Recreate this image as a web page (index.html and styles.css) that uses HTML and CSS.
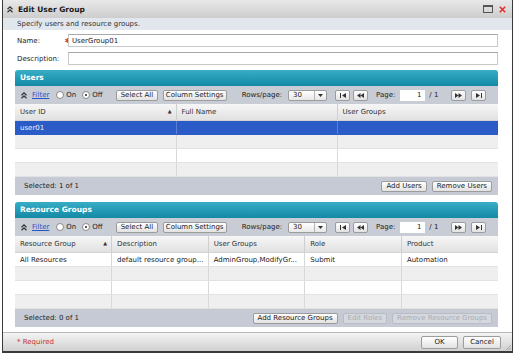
FILE: index.html
```html
<!DOCTYPE html>
<html lang="en">
<head>
    <meta charset="UTF-8">
    <title>Edit User Group</title>
    <link rel="stylesheet" href="styles.css">
</head>
<body>
    <div class="dialog">
        <div class="titlebar">
            <svg class="chev" width="6" height="7" viewBox="0 0 6 7"><path d="M0.5 3.3 L3 0.9 L5.5 3.3 M0.5 6.3 L3 3.9 L5.5 6.3" stroke="#333" stroke-width="1.2" fill="none"/></svg>
            <span class="title">Edit User Group</span>
            <span class="win-btns">
                <svg width="10" height="8" viewBox="0 0 10 8"><rect x="0.5" y="0.5" width="9" height="7" fill="none" stroke="#555"/><rect x="0.5" y="0.5" width="9" height="1.5" fill="#555"/></svg>
                <svg width="7" height="7" viewBox="0 0 7 7"><path d="M0.8 0.8 L6.2 6.2 M6.2 0.8 L0.8 6.2" stroke="#e03030" stroke-width="1.6"/></svg>
            </span>
        </div>
        <div class="subtitle">Specify users and resource groups.</div>

        <div class="form">
            <div class="field">
                <label for="name">Name:</label>
                <span class="req">&#8727;</span>
                <input type="text" id="name" value="UserGroup01">
            </div>
            <div class="field">
                <label for="desc">Description:</label>
                <span class="req"></span>
                <input type="text" id="desc">
            </div>
        </div>

        <section class="panel">
            <div class="panel-head">Users</div>
            <div class="toolbar">
                <svg class="chev" width="6" height="7" viewBox="0 0 6 7"><path d="M0.5 3.3 L3 0.9 L5.5 3.3 M0.5 6.3 L3 3.9 L5.5 6.3" stroke="#333" stroke-width="1.2" fill="none"/></svg>
                <a class="filter">Filter</a>
                <span class="radio"></span><span class="rlabel">On</span>
                <span class="radio on"></span><span class="rlabel">Off</span>
                <button class="btn sel-all">Select All</button>
                <button class="btn col-set">Column Settings</button>
                <span class="rows-label">Rows/page:</span>
                <div class="select"><span class="val">30</span><span class="arrow"><svg width="5" height="3" viewBox="0 0 5 3"><path d="M0 0 H5 L2.5 3 Z" fill="#333"/></svg></span></div>
                <button class="nav first"><svg width="6" height="5" viewBox="0 0 6 5"><rect x="0" y="0" width="1" height="5" fill="#333"/><path d="M6 0 V5 L2 2.5 Z" fill="#333"/></svg></button>
                <button class="nav prev"><svg width="7" height="5" viewBox="0 0 7 5"><path d="M3.5 0 V5 L0 2.5 Z M7 0 V5 L3.5 2.5 Z" fill="#333"/></svg></button>
                <span class="page-label">Page:</span>
                <span class="page-input">1</span>
                <span class="page-total">/ 1</span>
                <button class="nav next"><svg width="7" height="5" viewBox="0 0 7 5"><path d="M0 0 V5 L3.5 2.5 Z M3.5 0 V5 L7 2.5 Z" fill="#333"/></svg></button>
                <button class="nav last"><svg width="6" height="5" viewBox="0 0 6 5"><path d="M0 0 V5 L4 2.5 Z" fill="#333"/><rect x="5" y="0" width="1" height="5" fill="#333"/></svg></button>
            </div>
            <table class="grid">
                <thead>
                    <tr><th>User ID<span class="sort">&#9650;</span></th><th>Full Name</th><th>User Groups</th></tr>
                </thead>
                <tbody>
                    <tr class="selected"><td>user01</td><td></td><td></td></tr>
                    <tr><td></td><td></td><td></td></tr>
                    <tr><td></td><td></td><td></td></tr>
                    <tr><td></td><td></td><td></td></tr>
                </tbody>
            </table>
            <div class="panel-foot">
                <span>Selected: 1 of 1</span>
                <button class="btn first-btn">Add Users</button>
                <button class="btn">Remove Users</button>
            </div>
        </section>

        <section class="panel rg">
            <div class="panel-head">Resource Groups</div>
            <div class="toolbar">
                <svg class="chev" width="6" height="7" viewBox="0 0 6 7"><path d="M0.5 3.3 L3 0.9 L5.5 3.3 M0.5 6.3 L3 3.9 L5.5 6.3" stroke="#333" stroke-width="1.2" fill="none"/></svg>
                <a class="filter">Filter</a>
                <span class="radio"></span><span class="rlabel">On</span>
                <span class="radio on"></span><span class="rlabel">Off</span>
                <button class="btn sel-all">Select All</button>
                <button class="btn col-set">Column Settings</button>
                <span class="rows-label">Rows/page:</span>
                <div class="select"><span class="val">30</span><span class="arrow"><svg width="5" height="3" viewBox="0 0 5 3"><path d="M0 0 H5 L2.5 3 Z" fill="#333"/></svg></span></div>
                <button class="nav first"><svg width="6" height="5" viewBox="0 0 6 5"><rect x="0" y="0" width="1" height="5" fill="#333"/><path d="M6 0 V5 L2 2.5 Z" fill="#333"/></svg></button>
                <button class="nav prev"><svg width="7" height="5" viewBox="0 0 7 5"><path d="M3.5 0 V5 L0 2.5 Z M7 0 V5 L3.5 2.5 Z" fill="#333"/></svg></button>
                <span class="page-label">Page:</span>
                <span class="page-input">1</span>
                <span class="page-total">/ 1</span>
                <button class="nav next"><svg width="7" height="5" viewBox="0 0 7 5"><path d="M0 0 V5 L3.5 2.5 Z M3.5 0 V5 L7 2.5 Z" fill="#333"/></svg></button>
                <button class="nav last"><svg width="6" height="5" viewBox="0 0 6 5"><path d="M0 0 V5 L4 2.5 Z" fill="#333"/><rect x="5" y="0" width="1" height="5" fill="#333"/></svg></button>
            </div>
            <table class="grid">
                <thead>
                    <tr><th>Resource Group<span class="sort">&#9650;</span></th><th>Description</th><th>User Groups</th><th>Role</th><th>Product</th></tr>
                </thead>
                <tbody>
                    <tr><td>All Resources</td><td>default resource group...</td><td>AdminGroup,ModifyGr...</td><td>Submit</td><td>Automation</td></tr>
                    <tr><td></td><td></td><td></td><td></td><td></td></tr>
                    <tr><td></td><td></td><td></td><td></td><td></td></tr>
                    <tr><td></td><td></td><td></td><td></td><td></td></tr>
                </tbody>
            </table>
            <div class="panel-foot">
                <span>Selected: 0 of 1</span>
                <button class="btn first-btn">Add Resource Groups</button>
                <button class="btn" disabled>Edit Roles</button>
                <button class="btn" disabled>Remove Resource Groups</button>
            </div>
        </section>

        <div class="footer">
            <span class="required">* Required</span>
            <button class="btn ok">OK</button>
            <button class="btn cancel">Cancel</button>
            <svg class="grip" width="6" height="6" viewBox="0 0 6 6"><path d="M6 1 L1 6 M6 3.5 L3.5 6" stroke="#999" stroke-width="0.8"/></svg>
        </div>
    </div>
</body>
</html>
```

FILE: styles.css
```css
body {
    margin: 0;
    font-family: "DejaVu Sans", Verdana, sans-serif;
    font-size: 7px;
    color: #222;
    background: #fff;
}
.dialog {
    box-sizing: border-box;
    width: 511px;
    height: 353px;
    margin-left: 2px;
    border: 1px solid #3a3a3a;
    border-top: none;
    border-bottom-width: 2px;
    display: flex;
    flex-direction: column;
}
.titlebar {
    height: 18px;
    display: flex;
    align-items: center;
    padding: 0 6px 0 4px;
    background: linear-gradient(#e8e8e8, #cdcdcd);
    font-weight: bold;
    font-size: 7.5px;
    color: #1a1a1a;
}
.titlebar .chev {
    margin-right: 5px;
}
.win-btns {
    margin-left: auto;
    display: flex;
    align-items: center;
    gap: 6px;
}
.subtitle {
    height: 12px;
    line-height: 12px;
    padding-left: 14px;
    background: #e2e6ed;
    color: #333;
}
.form {
    padding: 4px 14px 0 14px;
}
.field {
    display: flex;
    align-items: center;
    height: 13px;
    margin-bottom: 5px;
}
.field label {
    width: 47px;
}
.req {
    width: 4px;
    color: #e03030;
    font-size: 8px;
    font-weight: bold;
    line-height: 13px;
}
.field input {
    flex: 1;
    box-sizing: border-box;
    height: 13px;
    margin: 0;
    padding: 0 3px;
    font: inherit;
    color: #222;
    border: 1px solid #c9c9c9;
    border-top-color: #a8a8a8;
    background: #fff;
    outline: none;
}

.panel {
    margin: 0 14px 0 12px;
}
.panel.rg {
    margin-top: 7px;
}
.panel-head {
    height: 16px;
    line-height: 16px;
    padding-left: 5px;
    border-radius: 3px 3px 0 0;
    background: linear-gradient(#37adc6, #1489a6);
    color: #fff;
    font-weight: bold;
    font-size: 7.5px;
}
.toolbar {
    height: 18px;
    display: flex;
    align-items: center;
    padding-left: 6px;
    background: #c8ccd5;
}
.filter {
    margin-left: 5px;
    color: #2456c8;
    text-decoration: underline;
}
.radio {
    box-sizing: border-box;
    width: 8px;
    height: 8px;
    margin-left: 7px;
    margin-right: 2px;
    border-radius: 50%;
    border: 1px solid #8a8a8a;
    background: #fff;
    display: flex;
    align-items: center;
    justify-content: center;
}
.radio + .rlabel + .radio {
    margin-left: 6px;
}
.radio.on::after {
    content: "";
    width: 2px;
    height: 2px;
    border-radius: 50%;
    background: #222;
}
.btn {
    box-sizing: border-box;
    height: 11px;
    margin: 0;
    padding: 0 4px;
    font: inherit;
    font-size: 7px;
    line-height: 9px;
    color: #222;
    border: 1px solid #9c9c9c;
    border-radius: 2px;
    background: linear-gradient(#ffffff, #e2e2e2);
    white-space: nowrap;
    overflow: hidden;
}
.btn:disabled {
    color: #a9adb4;
    border-color: #b9bcc3;
    background: #d5d8de;
}
.sel-all {
    width: 42px;
    margin-left: 13px;
}
.col-set {
    width: 64px;
    margin-left: 5px;
    padding: 0 2px;
}
.rows-label {
    margin-left: 15px;
}
.select {
    box-sizing: border-box;
    width: 39px;
    height: 11px;
    margin-left: 6px;
    display: flex;
    border: 1px solid #9c9c9c;
    border-radius: 2px;
    background: linear-gradient(#ffffff, #e8e8e8);
}
.select .val {
    flex: 1;
    padding-left: 4px;
    line-height: 9px;
}
.select .arrow {
    width: 11px;
    border-left: 1px solid #b5b5b5;
    display: flex;
    align-items: center;
    justify-content: center;
}
.nav {
    box-sizing: border-box;
    width: 15px;
    height: 11px;
    margin: 0 0 0 3px;
    padding: 0;
    border: 1px solid #9c9c9c;
    border-radius: 2px;
    background: linear-gradient(#ffffff, #e2e2e2);
    display: flex;
    align-items: center;
    justify-content: center;
}
.nav.first {
    margin-left: 8px;
}
.nav.next {
    margin-left: 13px;
}
.nav.last {
    margin-left: 5px;
}
.page-label {
    margin-left: 8px;
}
.page-input {
    box-sizing: border-box;
    width: 25px;
    height: 11px;
    margin-left: 5px;
    padding-right: 4px;
    line-height: 11px;
    text-align: right;
    background: #fff;
}
.page-total {
    margin-left: 4px;
}

.grid {
    width: 100%;
    border-collapse: collapse;
    table-layout: fixed;
}
.grid th {
    height: 16px;
    padding: 0 5px;
    text-align: left;
    font-weight: normal;
    color: #333;
    background: linear-gradient(#f6f6f6, #e1e1e1);
    border-right: 1px solid #cfcfcf;
    border-bottom: 1px solid #d2d2d2;
}
.grid td {
    height: 13px;
    padding: 0 5px;
    white-space: nowrap;
    overflow: hidden;
    border-right: 1px solid #d8d8d8;
    border-bottom: 1px solid #e2e2e2;
    background: #fff;
}
.grid th:last-child, .grid td:last-child {
    border-right: none;
}
.grid tbody tr:nth-child(even) td {
    background: #efefef;
}
.grid tr.selected td {
    background: #2a5bc6;
    color: #eef2ff;
    border-right-color: #5a80d6;
    border-bottom-color: #2a5bc6;
}
.sort {
    float: right;
    font-size: 5px;
    margin-right: -1px;
}
.panel-foot {
    height: 18px;
    display: flex;
    align-items: center;
    padding: 0 6px 0 9px;
    background: #c6cad4;
}
.panel-foot .btn {
    margin-left: 5px;
}
.panel-foot .first-btn {
    margin-left: auto;
}

.footer {
    position: relative;
    flex: 1;
    margin-top: 5px;
    display: flex;
    align-items: center;
    padding: 0 11px 0 14px;
    border-top: 1px solid #b8b8b8;
    background: linear-gradient(#f4f4f4, #d0d0d0);
}
.required {
    color: #c83030;
}
.footer .btn {
    height: 13px;
    line-height: 11px;
}
.ok {
    width: 37px;
    margin-left: auto;
}
.cancel {
    width: 38px;
    margin-left: 5px;
}
.grip {
    position: absolute;
    right: 1px;
    bottom: 1px;
}
```
